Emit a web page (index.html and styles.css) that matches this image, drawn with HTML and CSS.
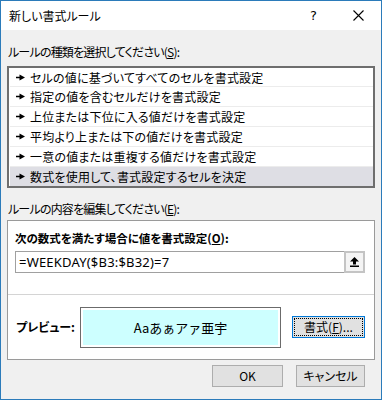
FILE: index.html
```html
<!DOCTYPE html>
<html lang="ja">
<head>
<meta charset="utf-8">
<link rel="stylesheet" href="styles.css">
</head>
<body>
<div class="window">
  <div class="titlebar">
    <span class="title">新しい書式ルール</span>
    <span class="tb-btn help">?</span>
    <span class="tb-btn close">
      <svg width="11" height="11" viewBox="0 0 11 11"><path d="M0.5 0.5L10.5 10.5M10.5 0.5L0.5 10.5" stroke="#000" stroke-width="1.1" fill="none"/></svg>
    </span>
  </div>
  <div class="content">
    <div class="label first">ルールの種類を選択してください(<u>S</u>):</div>
    <div class="listbox">
      <div class="row"><svg class="arr" width="9" height="7" viewBox="0 0 9 7"><rect x="0" y="2.75" width="4" height="1.5" fill="#000"/><path d="M3.5 0.5L9 3.5L3.5 6.5Z" fill="#000"/></svg>セルの値に基づいてすべてのセルを書式設定</div>
      <div class="row"><svg class="arr" width="9" height="7" viewBox="0 0 9 7"><rect x="0" y="2.75" width="4" height="1.5" fill="#000"/><path d="M3.5 0.5L9 3.5L3.5 6.5Z" fill="#000"/></svg>指定の値を含むセルだけを書式設定</div>
      <div class="row"><svg class="arr" width="9" height="7" viewBox="0 0 9 7"><rect x="0" y="2.75" width="4" height="1.5" fill="#000"/><path d="M3.5 0.5L9 3.5L3.5 6.5Z" fill="#000"/></svg>上位または下位に入る値だけを書式設定</div>
      <div class="row"><svg class="arr" width="9" height="7" viewBox="0 0 9 7"><rect x="0" y="2.75" width="4" height="1.5" fill="#000"/><path d="M3.5 0.5L9 3.5L3.5 6.5Z" fill="#000"/></svg>平均より上または下の値だけを書式設定</div>
      <div class="row"><svg class="arr" width="9" height="7" viewBox="0 0 9 7"><rect x="0" y="2.75" width="4" height="1.5" fill="#000"/><path d="M3.5 0.5L9 3.5L3.5 6.5Z" fill="#000"/></svg>一意の値または重複する値だけを書式設定</div>
      <div class="row selected"><svg class="arr" width="9" height="7" viewBox="0 0 9 7"><rect x="0" y="2.75" width="4" height="1.5" fill="#000"/><path d="M3.5 0.5L9 3.5L3.5 6.5Z" fill="#000"/></svg>数式を使用して、書式設定するセルを決定</div>
    </div>
    <div class="label second">ルールの内容を編集してください(<u>E</u>):</div>
    <div class="group">
      <div class="section formula">
        <div class="bold-label">次の数式を満たす場合に値を書式設定(<u>O</u>):</div>
        <div class="input">
          <span class="input-text">=WEEKDAY($B3:$B32)=7</span>
          <span class="collapse-btn">
            <svg width="9" height="10" viewBox="0 0 9 10"><path d="M4.5 0L9 4.5H6V7.5H3V4.5H0Z" fill="#000"/><rect x="0" y="8.5" width="9" height="1.5" fill="#000"/></svg>
          </span>
        </div>
      </div>
      <div class="section preview-row">
        <div class="bold-label preview-label">プレビュー:</div>
        <div class="preview"><div class="preview-inner">Aaあぁアァ亜宇</div></div>
        <div class="btn focused">書式(<u>F</u>)...</div>
      </div>
    </div>
    <div class="buttons">
      <div class="btn ok">OK</div>
      <div class="btn cancel">キャンセル</div>
    </div>
  </div>
</div>
</body>
</html>
```

FILE: styles.css
```css
html, body {
  margin: 0;
  padding: 0;
  background: #ffffff;
}
body {
  font-family: "Noto Sans CJK JP", "Noto Sans", sans-serif;
  font-size: 12px;
  color: #000;
  font-feature-settings: "palt";
}
.window {
  width: 380px;
  height: 398px;
  border: 1px solid #2b7bba;
  background: #f0f0f0;
  display: flex;
  flex-direction: column;
}
.titlebar {
  height: 29px;
  background: #ffffff;
  display: flex;
  align-items: center;
  padding-left: 8px;
}
.title {
  flex: 1;
  line-height: 16px;
}
.tb-btn {
  width: 45px;
  height: 29px;
  display: flex;
  align-items: center;
  justify-content: center;
}
.help {
  font-family: "DejaVu Sans", sans-serif;
  font-size: 13px;
}
.content {
  padding: 0 6px;
  display: flex;
  flex-direction: column;
}
.label {
  line-height: 16px;
  padding-left: 1px;
  letter-spacing: -0.8px;
}
.label.first {
  margin-top: 14px;
}
.label.second {
  margin-top: 13px;
}
.listbox {
  margin-top: 6px;
  border: 2px solid #6e6e6e;
  background: #ffffff;
  display: flex;
  flex-direction: column;
}
.row {
  height: 19px;
  line-height: 19px;
  display: flex;
  align-items: center;
  padding-left: 6px;
  border-top: 1px solid #ececec;
  margin-left: 1px;
  letter-spacing: 0.2px;
}
.row:first-child {
  border-top: none;
  height: 18px;
}
.row.selected {
  background: #dedee4;
}
.arr {
  margin-right: 5px;
  flex: none;
}
.group {
  margin-top: 3px;
  border: 1px solid #9a9a9a;
  background: #ffffff;
  display: flex;
  flex-direction: column;
}
.section.formula {
  padding: 9px 9px 0 7px;
  height: 64px;
  border-bottom: 1px solid #d4d4d4;
}
.bold-label {
  font-weight: bold;
  font-size: 11.5px;
  line-height: 16px;
}
.input {
  margin-top: 5px;
  height: 20px;
  border: 1px solid #a0a0a0;
  display: flex;
  align-items: stretch;
}
.input-text {
  flex: 1;
  font-family: "Noto Sans", sans-serif;
  font-size: 13px;
  letter-spacing: 0.2px;
  line-height: 20px;
  padding-left: 3px;
}
.collapse-btn {
  width: 17px;
  border: 2px solid #c4c4c4;
  background: #f4f4f4;
  display: flex;
  align-items: center;
  justify-content: center;
  margin: -1px -1px -1px 0;
}
.section.preview-row {
  height: 64px;
  display: flex;
  align-items: center;
  padding: 0 0 0 8px;
}
.preview-label {
  width: 64px;
  font-size: 12px;
}
.preview {
  width: 195px;
  height: 35px;
  border: 1px solid #6b6b6b;
  padding: 2px;
  background: #ffffff;
}
.preview-inner {
  height: 35px;
  background: #cdffff;
  display: flex;
  align-items: center;
  justify-content: center;
  font-size: 13px;
  font-feature-settings: normal;
}
.btn {
  height: 20px;
  border: 1px solid #adadad;
  background: #e1e1e1;
  display: flex;
  align-items: center;
  justify-content: center;
  line-height: 16px;
}
.btn.focused {
  margin-left: 11px;
  width: 71px;
  border-color: #0078d7;
  outline: 1px dotted #000;
  outline-offset: -3px;
}
.buttons {
  margin-top: 5px;
  display: flex;
  justify-content: flex-end;
  gap: 13px;
  padding-right: 10px;
}
.btn.ok {
  width: 69px;
}
.btn.cancel {
  width: 67px;
}
```
